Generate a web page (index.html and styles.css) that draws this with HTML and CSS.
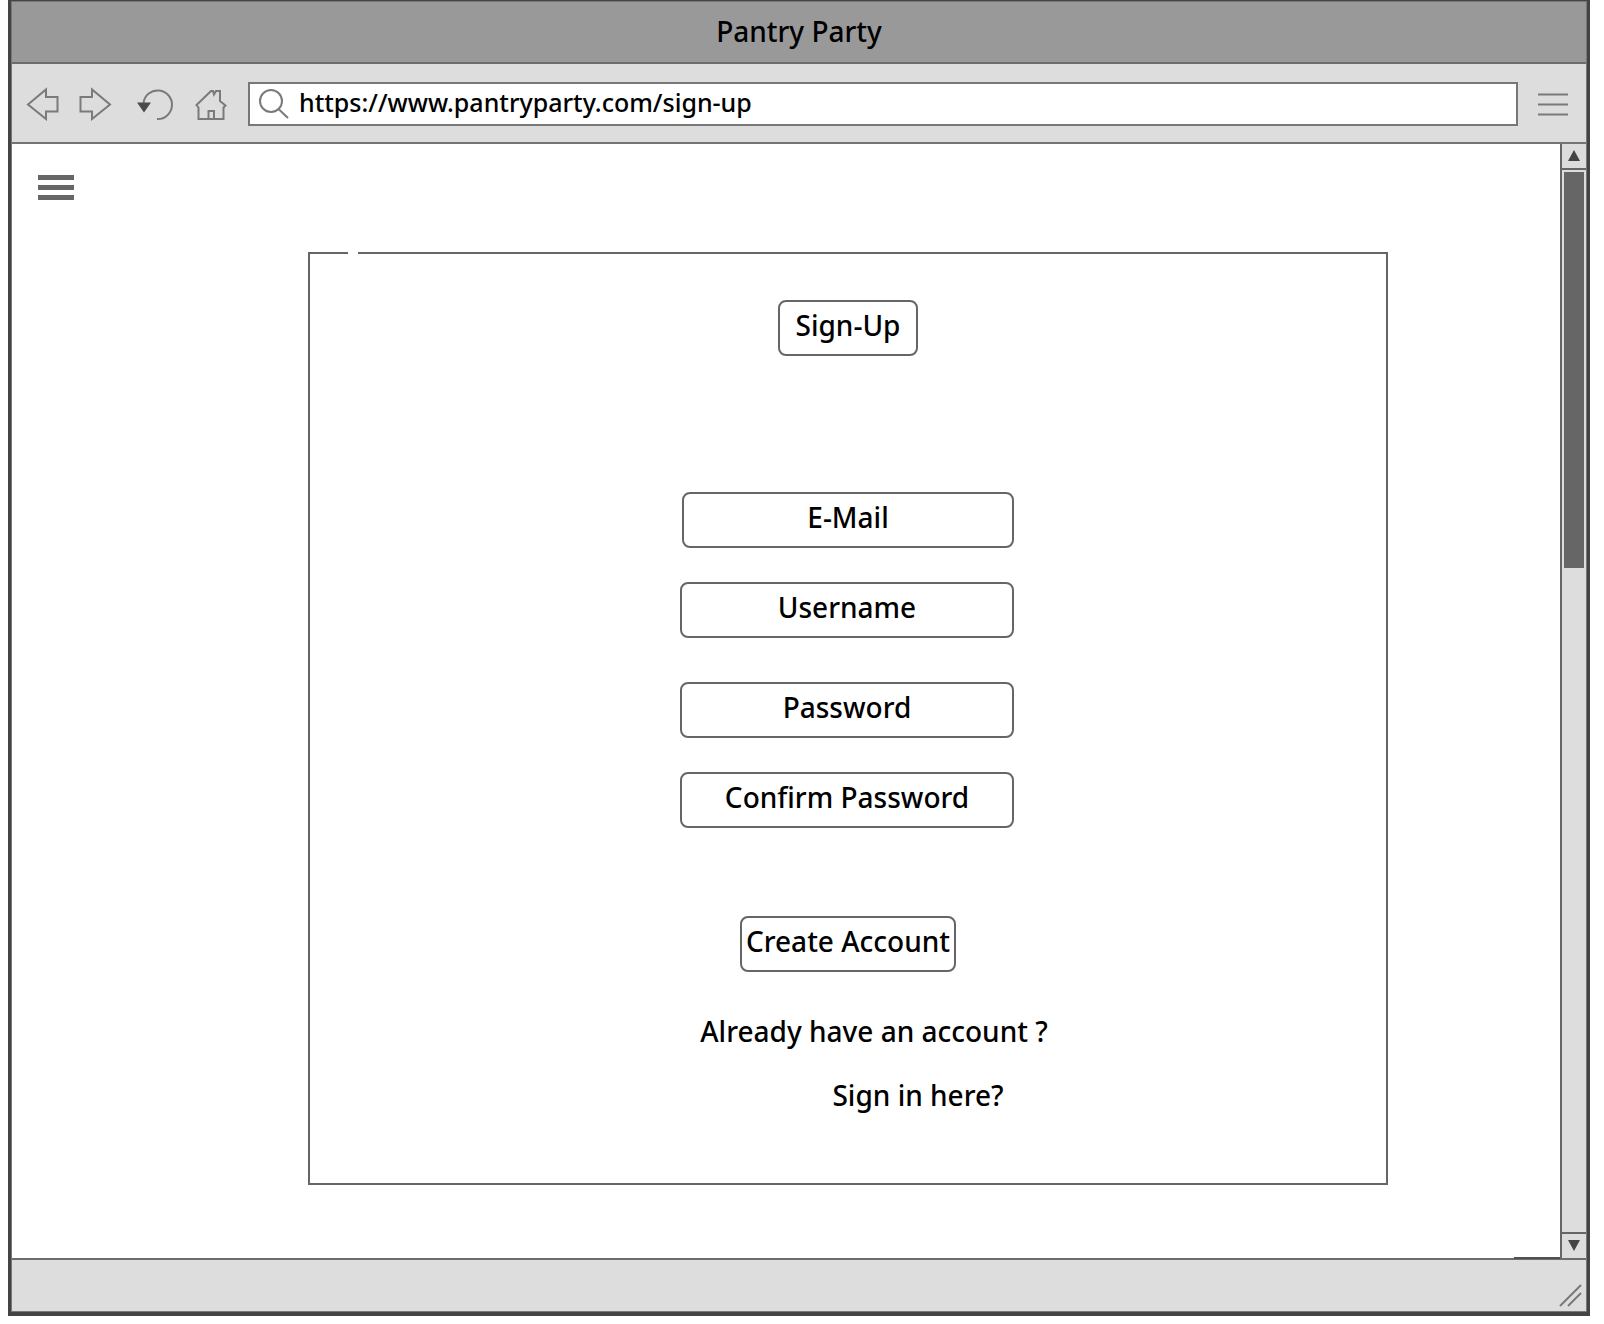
FILE: index.html
```
<!DOCTYPE html>
<html lang="en">
<head>
<meta charset="utf-8">
<meta name="viewport" content="width=device-width, initial-scale=1">
<title>Pantry Party</title>
<link rel="stylesheet" href="styles.css">
</head>
<body>
<div class="window">
  <div class="frame">
    <header class="titlebar">Pantry Party</header>
    <nav class="toolbar" aria-label="Browser">
      <button class="tool" type="button" aria-label="Back">
        <svg width="34" height="34" viewBox="0 0 34 34"><path d="M2 17.500 20 2.500V10H31.500V24.500H20V32Z"/></svg>
      </button>
      <button class="tool" type="button" aria-label="Forward">
        <svg width="34" height="34" viewBox="0 0 34 34"><path d="M32 17.500 14 2.500V10H2.500V24.500H14V32Z"/></svg>
      </button>
      <button class="tool tool-reload" type="button" aria-label="Reload">
        <svg width="40" height="34" viewBox="0 0 40 34"><path d="M7.500 16A14.300 14.300 0 1 1 21 32"/><path class="solid" d="M1 15.500H15L8 25.500Z"/></svg>
      </button>
      <button class="tool" type="button" aria-label="Home">
        <svg width="34" height="34" viewBox="0 0 34 34"><path d="M2.500 18 17 4H19L20 7.500 22 4H26V14L31.500 18.500 29.500 20.500V32H4.500V20.500Z M14.500 31.500V24H20V31.500"/></svg>
      </button>
      <label class="address">
        <svg width="34" height="34" viewBox="0 0 34 34"><circle cx="14" cy="14" r="11"/><path d="M21.500 22 31 31"/></svg>
        <input type="text" aria-label="Address" value="https://www.pantryparty.com/sign-up">
      </label>
      <button class="tool" type="button" aria-label="Browser menu">
        <svg width="34" height="34" viewBox="0 0 34 34"><path d="M2 7.500H32M2 17.500H32M2 27.500H32"/></svg>
      </button>
    </nav>
    <div class="viewport">
      <main class="page">
        <button class="menu" type="button" aria-label="Menu"><span></span><span></span><span></span></button>
        <form>
          <fieldset class="panel" aria-label="Sign up">
            <legend></legend>
            <button class="box heading" type="button">Sign-Up</button>
            <div class="fields">
              <input class="box email" type="email" placeholder="E-Mail" aria-label="E-Mail">
              <input class="box" type="text" placeholder="Username" aria-label="Username">
              <input class="box password" type="password" placeholder="Password" aria-label="Password">
              <input class="box" type="password" placeholder="Confirm Password" aria-label="Confirm Password">
            </div>
            <button class="box create" type="submit">Create Account</button>
            <p class="question">Already have an account ?</p>
            <a class="signin" href="#">Sign in here?</a>
          </fieldset>
        </form>
      </main>
      <div class="scrollbar">
        <button class="arrow up" type="button" aria-label="Scroll up"><svg width="14" height="12" viewBox="0 0 14 12"><path d="M7 0 13 11H1Z"/></svg></button>
        <div class="track"><div class="thumb"></div></div>
        <button class="arrow down" type="button" aria-label="Scroll down"><svg width="14" height="12" viewBox="0 0 14 12"><path d="M1 0H13L7 11Z"/></svg></button>
      </div>
    </div>
    <footer class="status">
      <svg width="24" height="24" viewBox="0 0 24 24"><path d="M1 23 22 2M9 23 22 10"/></svg>
    </footer>
  </div>
</div>
</body>
</html>
```
FILE: styles.css
```
* { box-sizing: border-box; }

body {
  margin: 0;
  min-height: 100vh;
  padding: 0 14px 8px 8px;
  display: flex;
  background: #fff;
  color: #000;
  font: 500 28px/36px "Noto Sans", "Open Sans", sans-serif;
}

button, input { font: inherit; color: inherit; }

button { padding: 0; border: 0; background: none; }

svg { display: block; fill: none; stroke: #7a7a7a; stroke-width: 2px; }

.window {
  flex: 1;
  display: flex;
  border: solid #444;
  border-width: 1px 3px 4px;
}

.frame {
  flex: 1;
  display: flex;
  flex-direction: column;
  border: 1px solid #777;
}

.titlebar {
  height: 62px;
  padding-top: 11px;
  border-bottom: 2px solid #6c6c6c;
  background: #999;
  text-align: center;
}

.toolbar {
  height: 80px;
  padding: 2px 16px 0 14px;
  display: flex;
  align-items: center;
  gap: 18px;
  border-bottom: 2px solid #747474;
  background: #ddd;
}

.tool-reload { margin-left: 6px; }

.solid { fill: #4a4a4a; stroke: none; }

.address {
  flex: 1;
  height: 44px;
  margin-left: 2px;
  padding-left: 7px;
  display: flex;
  align-items: center;
  gap: 8px;
  border: 2px solid #777;
  background: #fff;
}

.address input {
  flex: 1;
  min-width: 0;
  padding: 0 0 4px;
  border: 0;
  outline: 0;
  font-size: 25px;
}

.viewport { flex: 1; display: flex; }

.page {
  flex: 1;
  position: relative;
  padding: 31px 172px 72px 26px;
}

/* dark end of the status bar's rule, beside the scroll bar */
.page::after {
  content: "";
  position: absolute;
  right: 0;
  bottom: -1px;
  width: 46px;
  height: 2px;
  background: #505050;
}

.menu {
  width: 36px;
  display: flex;
  flex-direction: column;
  gap: 5px;
}

.menu span { height: 5px; width: 100%; background: #666; }

.panel {
  min-width: 0;
  margin: 52px 0 0 270px;
  padding: 46px 38px 70px;
  border: 2px solid #666;
}

.panel legend { width: 10px; height: 2px; padding: 0; }

.box {
  display: block;
  height: 56px;
  padding: 0 0 6px;
  border: 2px solid #666;
  border-radius: 8px;
  background: #fff;
  text-align: center;
  white-space: nowrap;
}

.box::placeholder { color: #000; opacity: 1; }

.heading { width: 140px; margin: 0 auto; }

.fields {
  width: 336px;
  margin: 136px auto 88px;
  padding-right: 2px;
  display: flex;
  flex-direction: column;
  gap: 34px;
}

.email { margin-left: 2px; }

.password { margin-top: 10px; }

.create { width: 216px; margin: 0 auto; }

.question { margin: 41px 0 28px; padding-left: 52px; text-align: center; }

.signin {
  display: block;
  padding-left: 140px;
  color: inherit;
  text-align: center;
  text-decoration: none;
}

.scrollbar {
  width: 26px;
  display: flex;
  flex-direction: column;
  border-left: 2px solid #666;
  background: #ddd;
}

.arrow {
  height: 26px;
  display: flex;
  align-items: center;
  justify-content: center;
}

.arrow svg { fill: #444; stroke: none; }

.up { border-bottom: 2px solid #666; }

.down { border-top: 2px solid #666; }

.track { flex: 1; padding: 2px; }

.thumb { height: 396px; background: #666; }

.status {
  height: 53px;
  padding: 0 3px 4px 0;
  display: flex;
  align-items: flex-end;
  justify-content: flex-end;
  border-top: 2px solid #6c6c6c;
  background: #ddd;
}
```
